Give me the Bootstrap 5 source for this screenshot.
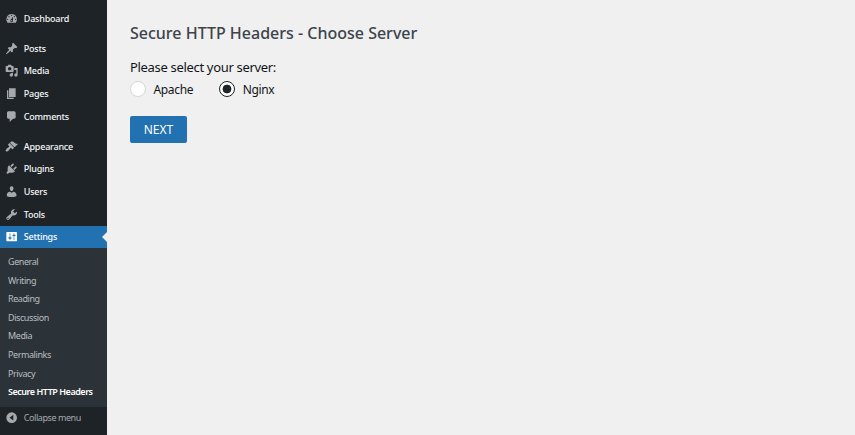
<!DOCTYPE html>
<html lang="en">
<head>
<meta charset="utf-8">
<meta name="viewport" content="width=device-width, initial-scale=1">
<title>Secure HTTP Headers</title>
<link href="https://cdn.jsdelivr.net/npm/bootstrap@5.3.0/dist/css/bootstrap.min.css" rel="stylesheet">
<style>
body{background:#f0f0f1;color:#1d2327;font-family:"Noto Sans","Open Sans",sans-serif;height:435px;overflow:hidden}
.admin-menu{width:107px;background:#1d2327;padding-top:7px;font-size:9px;letter-spacing:-.22px}
.admin-menu .nav-link{height:22.65px;padding:0 0 0 5px;color:#f6f7f7;line-height:1;white-space:nowrap;font-weight:500}
.admin-menu svg{width:13.3px;height:13.3px;fill:#a7aaad;margin-right:5.5px;flex:none}
.menu-gap{margin-top:7.4px}
.admin-menu .nav-link.current{background:#2271b1;color:#fff}
.admin-menu .current svg{fill:#fff}
.current::after{content:"";position:absolute;right:0;top:6px;border:5.5px solid transparent;border-right-color:#f0f0f1;border-left:0}
.submenu{background:#2c3338;padding:4px 0 5.5px;height:158.5px;letter-spacing:-.42px}
.admin-menu .submenu .nav-link{height:18.6px;padding-left:8px;color:#b9bec2;font-weight:400}
.admin-menu .submenu .nav-link.chosen{color:#fff;font-weight:600;letter-spacing:-.47px}
.admin-menu .nav-link.collapse-link{height:21.5px;color:#a7aaad;font-weight:400;letter-spacing:-.44px}
.content-area{padding:22px 0 0 23px}
.page-title{font-size:16px;font-weight:500;line-height:22px;color:#3c434a;margin:0 0 14px}
.prompt{font-size:13px;line-height:19px;margin:0;color:#101517;letter-spacing:-.32px}
.choice{font-size:12px;line-height:20px;color:#101517;letter-spacing:-.35px}
.choice span{padding-top:3px}
.choice .form-check-input{width:16px;height:16px;margin:0 7.5px 0 0;border:1px solid #d5d6d8;background-color:#fff;box-shadow:none}
.choice .form-check-input:checked{border-color:#1d2327;background-image:radial-gradient(circle,#1d2327 0 4.1px,transparent 4.7px)}
.choice-gap{margin-right:26px}
.btn-next{width:57px;height:27px;background:#2271b1;border-radius:2px;font-size:12px;line-height:28px;margin-top:16px}
</style>
<script src="https://cdn.jsdelivr.net/npm/bootstrap@5.3.0/dist/js/bootstrap.bundle.min.js"></script>
</head>
<body class="d-flex">
<nav class="admin-menu nav flex-column flex-nowrap flex-shrink-0">
<a class="nav-link d-flex align-items-center" href="#"><svg viewBox="0 0 20 20"><path d="M3.76 16h12.48A7.998 7.998 0 0 0 10 3a7.998 7.998 0 0 0-6.24 13zM10 4c.55 0 1 .45 1 1s-.45 1-1 1-1-.45-1-1 .45-1 1-1zM6 6c.55 0 1 .45 1 1s-.45 1-1 1-1-.45-1-1 .45-1 1-1zm8 0c.55 0 1 .45 1 1s-.45 1-1 1-1-.45-1-1 .45-1 1-1zm-5.37 5.55L12 7v6c0 1.1-.9 2-2 2s-2-.9-2-2c0-.57.24-1.08.63-1.45zM4 10c.55 0 1 .45 1 1s-.45 1-1 1-1-.45-1-1 .45-1 1-1zm12 0c.55 0 1 .45 1 1s-.45 1-1 1-1-.45-1-1 .45-1 1-1zm-5 3c0-.55-.45-1-1-1s-1 .45-1 1 .45 1 1 1 1-.45 1-1z"/></svg><span>Dashboard</span></a>
<a class="nav-link d-flex align-items-center menu-gap" href="#"><svg viewBox="0 0 20 20"><path d="M10.44 3.02l1.82-1.82 6.36 6.35-1.83 1.82c-1.05-.68-2.48-.57-3.41.36l-.75.75c-.92.93-1.04 2.35-.35 3.41l-1.83 1.82-2.41-2.41-2.8 2.79c-.42.42-3.38 2.71-3.8 2.29s1.86-3.39 2.28-3.81l2.79-2.79L4.1 9.36l1.83-1.82c1.05.69 2.48.57 3.4-.36l.75-.75c.93-.92 1.05-2.35.36-3.41z"/></svg><span>Posts</span></a>
<a class="nav-link d-flex align-items-center" href="#"><svg viewBox="0 0 20 20"><path fill-rule="evenodd" d="M13 11V4c0-.55-.45-1-1-1h-1.67L9 1H5L3.67 3H2c-.55 0-1 .45-1 1v7c0 .55.45 1 1 1h10c.55 0 1-.45 1-1zM7 4.5c1.38 0 2.5 1.12 2.5 2.5S8.38 9.5 7 9.5 4.5 8.38 4.5 7 5.62 4.5 7 4.5zM14 6h5v10.5c0 1.38-1.12 2.5-2.5 2.5S14 17.88 14 16.5s1.12-2.5 2.5-2.5c.17 0 .34.02.5.05V9h-3V6zm-4 8.05V13h2v3.5c0 1.38-1.12 2.5-2.5 2.5S7 17.88 7 16.5 8.12 14 9.5 14c.17 0 .34.02.5.05z"/></svg><span>Media</span></a>
<a class="nav-link d-flex align-items-center" href="#"><svg viewBox="0 0 20 20"><path d="M6 15V2h10v13H6zm-1 1h8v2H3V5h2v11z"/></svg><span>Pages</span></a>
<a class="nav-link d-flex align-items-center" href="#"><svg viewBox="0 0 20 20"><path d="M5 2h9q.82 0 1.41.59T16 4v7q0 .82-.59 1.41T14 13h-2l-5 5v-5H5q-.82 0-1.41-.59T3 11V4q0-.82.59-1.41T5 2z"/></svg><span>Comments</span></a>
<a class="nav-link d-flex align-items-center menu-gap" href="#"><svg viewBox="0 0 20 20"><path d="M14.48 11.06L7.41 3.99l1.5-1.5c.5-.56 2.3-.47 3.51.32 1.21.8 1.43 1.28 2.91 2.1 1.18.64 2.45 1.26 4.45.85zm-.71.71L6.7 4.7 4.93 6.47c-.39.39-.39 1.02 0 1.41l1.06 1.06c.39.39.39 1.03 0 1.42-.6.6-1.43 1.11-2.21 1.69-.35.26-.7.53-1.01.84C1.43 14.23.4 16.08 1.4 17.07c.99 1 2.84-.03 4.18-1.36.31-.31.58-.66.85-1.02.57-.78 1.08-1.61 1.69-2.21.39-.39 1.02-.39 1.41 0l1.06 1.06c.39.39 1.02.39 1.41 0z"/></svg><span>Appearance</span></a>
<a class="nav-link d-flex align-items-center" href="#"><svg viewBox="0 0 20 20"><path d="M13.11 4.36L9.87 7.6 8 5.73l3.24-3.24c.35-.34 1.05-.2 1.56.32.52.51.66 1.21.31 1.55zm-8 1.77l.91-1.12 9.01 9.01-1.19.84c-.71.71-2.63 1.16-3.82 1.16H6.14L4.9 17.26c-.59.59-1.54.59-2.12 0-.59-.58-.59-1.53 0-2.12l1.24-1.24v-3.88c0-1.13.4-3.19 1.09-3.89zm7.26 3.97l3.24-3.24c.34-.35 1.04-.21 1.55.31.52.51.66 1.21.31 1.55l-3.24 3.25z"/></svg><span>Plugins</span></a>
<a class="nav-link d-flex align-items-center" href="#"><svg viewBox="0 0 20 20"><path d="M10 9.25c-2.27 0-2.73-3.44-2.73-3.44C7 4.02 7.82 2 9.97 2c2.16 0 2.98 2.02 2.71 3.81 0 0-.41 3.44-2.68 3.44zm0 2.57L12.72 10c2.39 0 4.52 2.33 4.52 4.53v2.49s-3.65 1.13-7.24 1.13c-3.65 0-7.24-1.13-7.24-1.13v-2.49c0-2.25 1.94-4.48 4.47-4.48z"/></svg><span>Users</span></a>
<a class="nav-link d-flex align-items-center" href="#"><svg viewBox="0 0 20 20"><path fill-rule="evenodd" d="M16.68 9.77c-1.34 1.34-3.3 1.67-4.95.99l-5.41 6.52c-.99.99-2.59.99-3.58 0s-.99-2.59 0-3.57l6.52-5.42c-.68-1.65-.35-3.61.99-4.95 1.28-1.28 3.12-1.62 4.72-1.06l-2.89 2.89 2.82 2.82 2.86-2.87c.53 1.58.18 3.39-1.08 4.65zM3.81 16.21c.4.39 1.04.39 1.43 0 .4-.4.4-1.04 0-1.43-.39-.4-1.03-.4-1.43 0-.39.39-.39 1.03 0 1.43z"/></svg><span>Tools</span></a>
<a class="nav-link d-flex align-items-center position-relative current" href="#"><svg viewBox="0 0 20 20"><path fill-rule="evenodd" d="M18 16V4c0-.55-.45-1-1-1H3c-.55 0-1 .45-1 1v12c0 .55.45 1 1 1h14c.55 0 1-.45 1-1zM8 11h1c.55 0 1 .45 1 1s-.45 1-1 1H8v1.5c0 .28-.22.5-.5.5s-.5-.22-.5-.5V13H6c-.55 0-1-.45-1-1s.45-1 1-1h1V5.5c0-.28.22-.5.5-.5s.5.22.5.5V11zm5-2h-1c-.55 0-1-.45-1-1s.45-1 1-1h1V5.5c0-.28.22-.5.5-.5s.5.22.5.5V7h1c.55 0 1 .45 1 1s-.45 1-1 1h-1v5.5c0 .28-.22.5-.5.5s-.5-.22-.5-.5V9z"/></svg><span>Settings</span></a>
<div class="submenu nav flex-column flex-nowrap flex-shrink-0">
<a class="nav-link d-flex align-items-center" href="#">General</a>
<a class="nav-link d-flex align-items-center" href="#">Writing</a>
<a class="nav-link d-flex align-items-center" href="#">Reading</a>
<a class="nav-link d-flex align-items-center" href="#">Discussion</a>
<a class="nav-link d-flex align-items-center" href="#">Media</a>
<a class="nav-link d-flex align-items-center" href="#">Permalinks</a>
<a class="nav-link d-flex align-items-center" href="#">Privacy</a>
<a class="nav-link d-flex align-items-center chosen" href="#">Secure HTTP Headers</a>
</div>
<a class="nav-link d-flex align-items-center collapse-link" href="#"><svg viewBox="0 0 20 20"><path fill-rule="evenodd" d="M10 2a8 8 0 1 0 0 16 8 8 0 0 0 0-16zM12.5 5.8v8.4L6.8 10z"/></svg><span>Collapse menu</span></a>
</nav>
<main class="content-area flex-grow-1">
<h1 class="page-title">Secure HTTP Headers - Choose Server</h1>
<form>
<p class="prompt">Please select your server:</p>
<div class="d-flex">
<label class="choice choice-gap d-flex align-items-center"><input class="form-check-input" type="radio" name="server"><span>Apache</span></label>
<label class="choice d-flex align-items-center"><input class="form-check-input" type="radio" name="server" checked><span>Nginx</span></label>
</div>
<button class="btn btn-next text-white border-0 p-0 d-block" type="button">NEXT</button>
</form>
</main>
</body>
</html>
